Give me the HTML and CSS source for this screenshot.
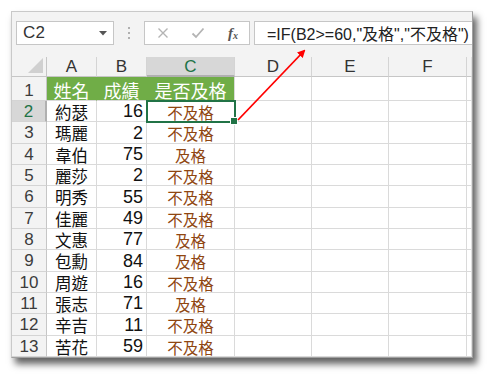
FILE: index.html
```html
<!DOCTYPE html>
<html lang="zh-Hant">
<head>
<meta charset="utf-8">
<title>Excel IF</title>
<link rel="stylesheet" href="styles.css">
</head>
<body>
<div class="window">
  <div class="fbar">
    <div class="namebox">
      <span class="nb-text">C2</span>
      <svg class="nb-drop" width="8" height="5" viewBox="0 0 8 5"><polygon points="0,0 8,0 4,4.5" fill="#555"/></svg>
    </div>
    <div class="sep"><i></i><i></i><i></i></div>
    <div class="fbtns">
      <svg width="12" height="12" viewBox="0 0 12 12"><path d="M1.5 1.5 L10.5 10.5 M10.5 1.5 L1.5 10.5" stroke="#b4b4b4" stroke-width="1.4" fill="none"/></svg>
      <svg width="14" height="12" viewBox="0 0 14 12"><path d="M1.5 6.5 L5 10 L12.5 1.5" stroke="#b4b4b4" stroke-width="1.8" fill="none"/></svg>
      <span class="fx">f<sub>x</sub></span>
    </div>
    <div class="formula">=IF(B2&gt;=60,"及格","不及格")</div>
  </div>
  <div class="sheet">
    <div class="corner"><svg width="15" height="15" viewBox="0 0 15 15"><polygon points="15,0 15,15 0,15" fill="#d0d0d0"/></svg></div>
    <div class="ch">A</div><div class="ch">B</div><div class="ch sel">C</div><div class="ch">D</div><div class="ch">E</div><div class="ch">F</div><div class="ch end"></div>

    <div class="rh r1">1</div><div class="c hd">姓名</div><div class="c hd">成績</div><div class="c hd">是否及格</div><div class="c"></div><div class="c"></div><div class="c"></div><div class="c end"></div>

    <div class="rh sel">2</div><div class="c nm">約瑟</div><div class="c sc">16</div><div class="c rs active">不及格</div><div class="c"></div><div class="c"></div><div class="c"></div><div class="c end"></div>
    <div class="rh">3</div><div class="c nm">瑪麗</div><div class="c sc">2</div><div class="c rs">不及格</div><div class="c"></div><div class="c"></div><div class="c"></div><div class="c end"></div>
    <div class="rh">4</div><div class="c nm">韋伯</div><div class="c sc">75</div><div class="c rs">及格</div><div class="c"></div><div class="c"></div><div class="c"></div><div class="c end"></div>
    <div class="rh">5</div><div class="c nm">麗莎</div><div class="c sc">2</div><div class="c rs">不及格</div><div class="c"></div><div class="c"></div><div class="c"></div><div class="c end"></div>
    <div class="rh">6</div><div class="c nm">明秀</div><div class="c sc">55</div><div class="c rs">不及格</div><div class="c"></div><div class="c"></div><div class="c"></div><div class="c end"></div>
    <div class="rh">7</div><div class="c nm">佳麗</div><div class="c sc">49</div><div class="c rs">不及格</div><div class="c"></div><div class="c"></div><div class="c"></div><div class="c end"></div>
    <div class="rh">8</div><div class="c nm">文惠</div><div class="c sc">77</div><div class="c rs">及格</div><div class="c"></div><div class="c"></div><div class="c"></div><div class="c end"></div>
    <div class="rh">9</div><div class="c nm">包勳</div><div class="c sc">84</div><div class="c rs">及格</div><div class="c"></div><div class="c"></div><div class="c"></div><div class="c end"></div>
    <div class="rh">10</div><div class="c nm">周遊</div><div class="c sc">16</div><div class="c rs">不及格</div><div class="c"></div><div class="c"></div><div class="c"></div><div class="c end"></div>
    <div class="rh">11</div><div class="c nm">張志</div><div class="c sc">71</div><div class="c rs">及格</div><div class="c"></div><div class="c"></div><div class="c"></div><div class="c end"></div>
    <div class="rh">12</div><div class="c nm">辛吉</div><div class="c sc">11</div><div class="c rs">不及格</div><div class="c"></div><div class="c"></div><div class="c"></div><div class="c end"></div>
    <div class="rh">13</div><div class="c nm">苦花</div><div class="c sc">59</div><div class="c rs">不及格</div><div class="c"></div><div class="c"></div><div class="c"></div><div class="c end"></div>
  </div>
  <svg class="arrow" width="460" height="345" viewBox="0 0 460 345">
    <defs>
      <marker id="ah" markerWidth="8" markerHeight="8" refX="6" refY="4" orient="auto" markerUnits="userSpaceOnUse">
        <polygon points="0,0 8,4 0,8" fill="#f00"/>
      </marker>
    </defs>
    <line x1="226" y1="108" x2="292" y2="39" stroke="#f00" stroke-width="1.8" marker-end="url(#ah)"/>
  </svg>
</div>
</body>
</html>
```

FILE: styles.css
```css
* { box-sizing: border-box; }
html, body { margin: 0; padding: 0; background: #fff; }
body {
  width: 492px;
  height: 378px;
  overflow: hidden;
  font-family: "Liberation Sans", "Noto Sans CJK TC", sans-serif;
}
.window {
  position: relative;
  margin: 11px 0 0 11px;
  width: 462px;
  height: 347px;
  background: #f3f3f3;
  border: 1px solid #c9c9c9;
  border-right-color: #a0a0a0;
  border-bottom-color: #a0a0a0;
  box-shadow: 4px 6px 7px rgba(0, 0, 0, 0.62);
  overflow: visible;
}
.fbar {
  display: flex;
  align-items: stretch;
  height: 45px;
  padding: 9px 0 12px 4px;
}
.namebox {
  width: 98px;
  background: #fff;
  border: 1px solid #c6c6c6;
  display: flex;
  align-items: center;
  justify-content: space-between;
  padding: 0 6px 0 6px;
}
.nb-text { font-size: 17px; color: #333; letter-spacing: 0.3px; }
.nb-drop { margin-top: 1px; }
.sep {
  width: 30px;
  display: flex;
  flex-direction: column;
  align-items: center;
  justify-content: center;
  gap: 3px;
}
.sep i {
  display: block;
  width: 2px;
  height: 2px;
  background: #b0b0b0;
}
.fbtns {
  width: 106px;
  background: #fff;
  border: 1px solid #c6c6c6;
  display: flex;
  align-items: center;
  padding: 0 0 0 12px;
  gap: 21px;
}
.fbtns svg:nth-child(2) { margin-left: 1px; }
.fx {
  font-family: "Liberation Serif", serif;
  font-style: italic;
  font-weight: bold;
  font-size: 15px;
  color: #555;
  margin-left: 2px;
}
.fx sub { font-size: 10px; vertical-align: -1px; }
.formula {
  flex: 1;
  margin-left: 4px;
  background: #fff;
  border: 1px solid #c6c6c6;
  border-right: none;
  padding: 0 0 0 12px;
  display: flex;
  align-items: center;
  font-size: 16px;
  color: #222;
  white-space: nowrap;
  overflow: hidden;
}
.sheet {
  display: grid;
  grid-template-columns: 35px 50px 50px 88px 77px 77px 78px 5px;
  grid-template-rows: 20px 24px repeat(4, 21px 22px 21px);
  background: #fff;
}
.corner {
  background: #f3f3f3;
  border-right: 1px solid #c6c6c6;
  border-bottom: 1px solid #c6c6c6;
  display: flex;
  align-items: flex-end;
  justify-content: flex-end;
  padding: 0 3px 3px 0;
}
.ch {
  background: #f3f3f3;
  border-right: 1px solid #d4d4d4;
  border-bottom: 1px solid #c6c6c6;
  display: flex;
  align-items: center;
  justify-content: center;
  font-size: 17px;
  color: #333;
  padding-top: 1px;
}
.ch.sel {
  background: #d7d7d7;
  color: #217346;
  border-bottom: 2px solid #b0b0b0;
}
.ch.end, .c.end { border-right: 1px solid #e0e0e0; }
.rh {
  background: #f3f3f3;
  border-right: 1px solid #c6c6c6;
  border-bottom: 1px solid #d4d4d4;
  display: flex;
  align-items: center;
  justify-content: center;
  font-size: 17px;
  color: #3c3c3c;
  padding-top: 1px;
}
.rh.r1 { padding-top: 4px; }
.rh.sel {
  background: #d7d7d7;
  color: #217346;
  border-right: 2px solid #b0b0b0;
}
.c {
  position: relative;
  border-right: 1px solid #dadada;
  border-bottom: 1px solid #dadada;
  display: flex;
  align-items: center;
  padding-top: 1px;
  font-size: 17px;
  color: #111;
  white-space: nowrap;
}
.c.hd {
  background: #70ad47;
  border-right-color: #70ad47;
  color: #fff;
  font-size: 18px;
  justify-content: center;
  padding-top: 3px;
}
.c.hd:nth-child(12) { border-right-color: #dadada; }
.nm { justify-content: center; font-size: 16.5px; }
.sc { justify-content: flex-end; padding-right: 3px; font-size: 18px; }
.rs { justify-content: center; color: #8f4611; font-size: 15.5px; }
.c.active {
  outline: 2px solid #217346;
  outline-offset: -1px;
  z-index: 1;
}
.c.active::after {
  content: "";
  position: absolute;
  right: -4px;
  bottom: -4px;
  width: 6px;
  height: 6px;
  background: #217346;
  border: 1px solid #fff;
}
.arrow {
  position: absolute;
  left: 0;
  top: 0;
  pointer-events: none;
  z-index: 2;
}
```
